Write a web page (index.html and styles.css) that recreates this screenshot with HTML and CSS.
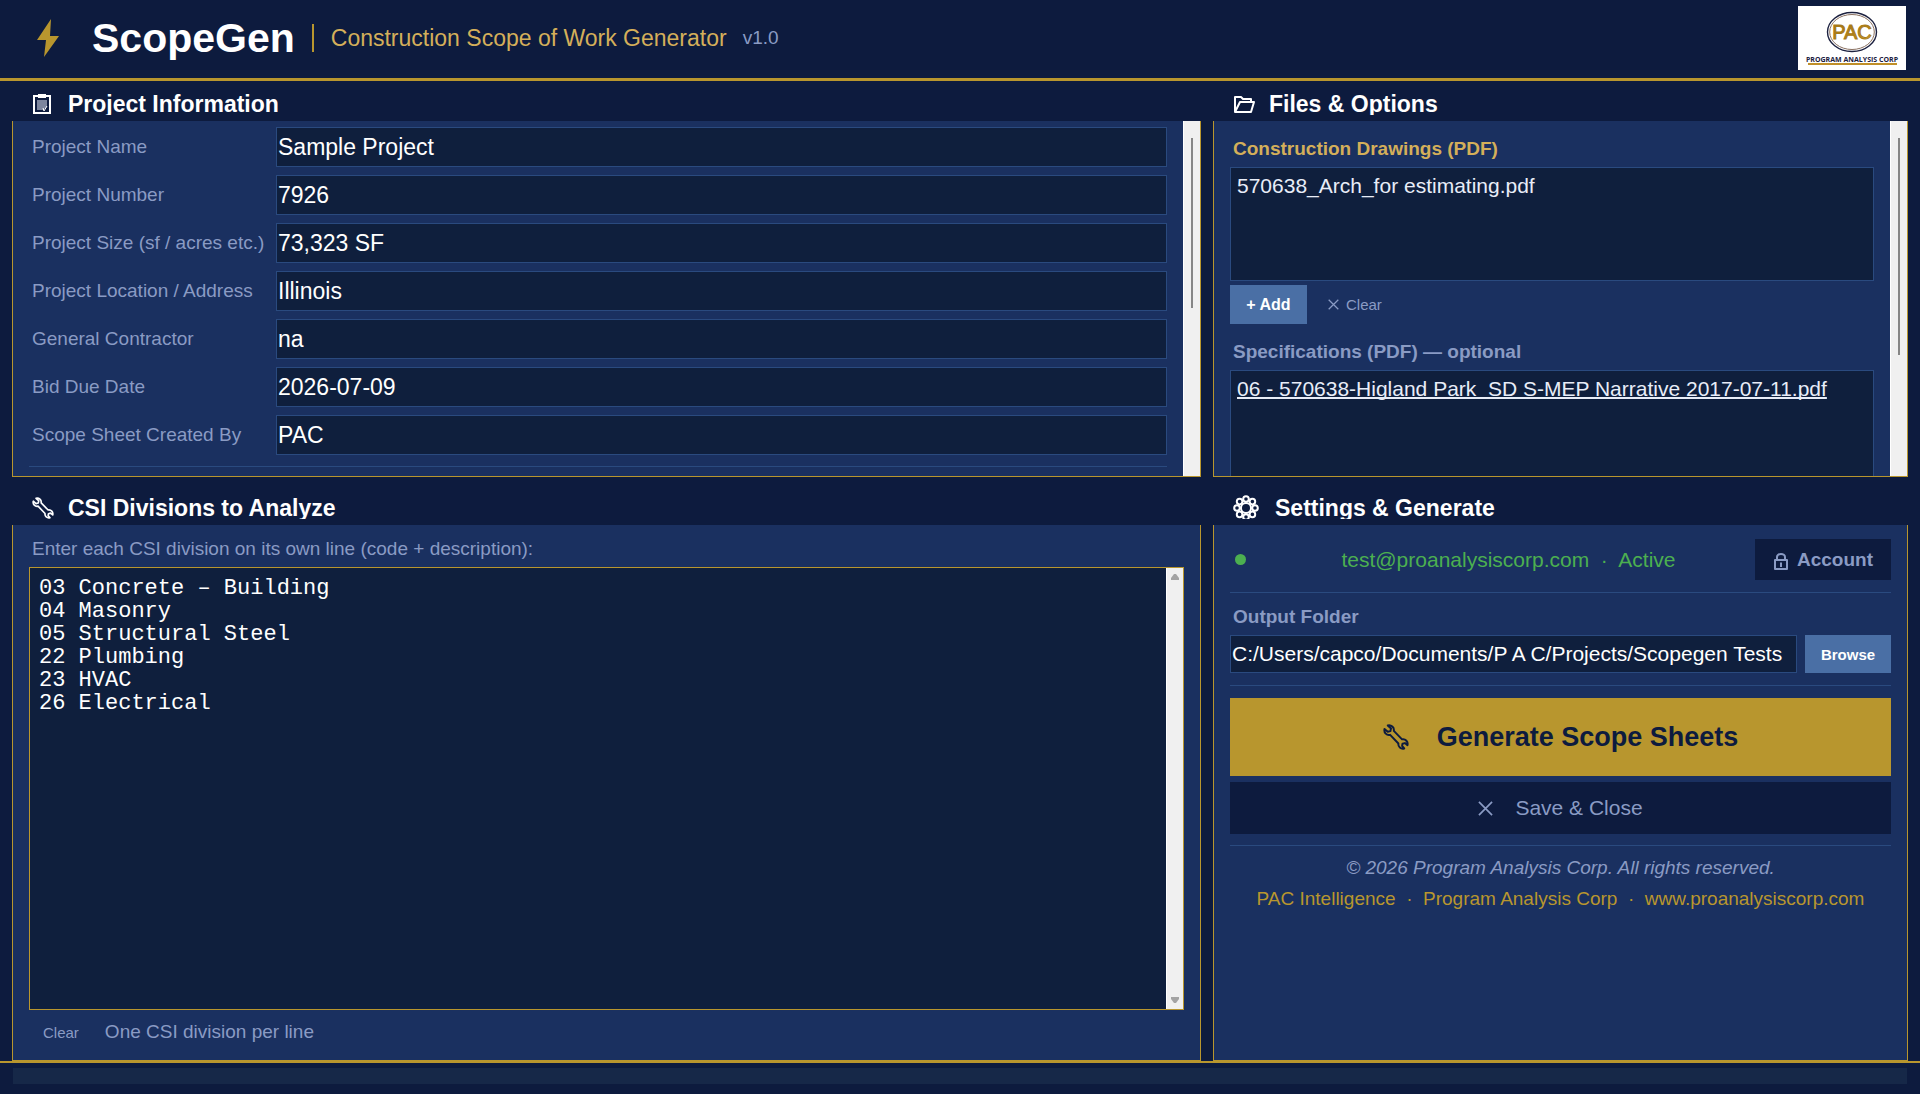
FILE: index.html
```html
<!DOCTYPE html>
<html lang="en">
<head>
    <meta charset="UTF-8">
    <title>ScopeGen - Construction Scope of Work Generator</title>
    <meta name="viewport" content="width=device-width, initial-scale=1">
    <link rel="stylesheet" href="styles.css">
</head>
<body>
    <!-- shared icons -->
    <svg class="icon-defs" aria-hidden="true">
        <symbol id="wrench" viewBox="0 0 24 24">
            <path d="M4.4 1.4 L7.4 4.2 L6.8 6.6 L4.4 7.2 L1.4 4.6 C0.6 8 3.4 10.8 6.6 10 L14.2 18 C13.8 21 16.4 23.4 19.6 22.6 L17.6 20.2 L18 18.2 L20.2 17.6 L22.6 19.6 C23.4 16.4 20.8 13.6 17.6 14.2 L10 6.4 C10.6 3.2 7.6 0.6 4.4 1.4 Z" fill="none" stroke="currentColor" stroke-width="1.8" stroke-linejoin="round"/>
        </symbol>
        <symbol id="cross" viewBox="0 0 16 16">
            <path d="M1 1 L15 15 M15 1 L1 15" fill="none" stroke="currentColor" stroke-width="1.8"/>
        </symbol>
    </svg>

    <header class="app-header">
        <svg class="bolt" viewBox="0 0 22 38"><path d="M14 0 L0 21 H9 L7 38 L22 17 H13 Z" fill="#b8962e"/></svg>
        <h1 class="app-name">ScopeGen</h1>
        <span class="header-divider"></span>
        <span class="app-subtitle">Construction Scope of Work Generator</span>
        <span class="app-version">v1.0</span>
        <svg class="logo" viewBox="0 0 108 64" role="img" aria-label="Program Analysis Corp">
            <defs>
                <linearGradient id="gold" x1="0" y1="0" x2="1" y2="1">
                    <stop offset="0" stop-color="#9a6a14"/>
                    <stop offset="0.6" stop-color="#b98a1c"/>
                    <stop offset="1" stop-color="#d9b040"/>
                </linearGradient>
            </defs>
            <rect width="108" height="64" fill="#fff"/>
            <ellipse cx="54" cy="26" rx="24.5" ry="19.5" fill="none" stroke="#1c2140" stroke-width="1.4"/>
            <ellipse cx="54" cy="26" rx="22.3" ry="17.5" fill="none" stroke="#8a7060" stroke-width="1"/>
            <text class="logo-mark" x="54" y="33" text-anchor="middle">PAC</text>
            <text class="logo-name" x="54" y="56" text-anchor="middle">PROGRAM ANALYSIS CORP</text>
            <rect x="10" y="57" width="89" height="2" fill="#c08f28"/>
        </svg>
    </header>

    <main class="panels">
        <section class="panel">
            <h2 class="panel-title">
                <svg class="title-icon clipboard" viewBox="0 0 18 20"><rect x="1" y="2" width="16" height="17" fill="#0d1b3e" stroke="#fff" stroke-width="2"/><rect x="5" y="0" width="8" height="4" fill="#fff"/><path d="M4 6 H14 V13 L10 16 H4 Z" fill="#7d869e"/><path d="M10 14 L11 17 L14 12" fill="none" stroke="#fff" stroke-width="1"/></svg>
                Project Information
            </h2>
            <div class="panel-body scroll-area">
                <form class="project-form">
                    <label for="projName">Project Name</label>
                    <input type="text" id="projName" value="Sample Project">
                    <label for="projNumber">Project Number</label>
                    <input type="text" id="projNumber" value="7926">
                    <label for="projSize">Project Size (sf / acres etc.)</label>
                    <input type="text" id="projSize" value="73,323 SF">
                    <label for="projLocation">Project Location / Address</label>
                    <input type="text" id="projLocation" value="Illinois">
                    <label for="contractor">General Contractor</label>
                    <input type="text" id="contractor" value="na">
                    <label for="bidDate">Bid Due Date</label>
                    <input type="text" id="bidDate" value="2026-07-09">
                    <label for="createdBy">Scope Sheet Created By</label>
                    <input type="text" id="createdBy" value="PAC">
                    <hr class="form-divider">
                </form>
                <div class="scrollbar"><span class="thumb thumb-short"></span></div>
            </div>
        </section>

        <section class="panel">
            <h2 class="panel-title">
                <svg class="title-icon folder" viewBox="0 0 22 20"><path d="M2 18 V3 H8 L10 5 H18 V8 M2 18 L7 8 H21 L18 18 Z" fill="none" stroke="#fff" stroke-width="2" stroke-linejoin="round"/></svg>
                Files &amp; Options
            </h2>
            <div class="panel-body scroll-area">
                <div class="files">
                    <h3 class="field-title gold">Construction Drawings (PDF)</h3>
                    <ul class="file-list">
                        <li>570638_Arch_for estimating.pdf</li>
                    </ul>
                    <div class="file-actions">
                        <button type="button" class="btn-blue btn-add">+ Add</button>
                        <button type="button" class="btn-text"><svg class="cross-small"><use href="#cross"/></svg>Clear</button>
                    </div>
                    <h3 class="field-title">Specifications (PDF) — optional</h3>
                    <ul class="file-list">
                        <li class="active">06 - 570638-Higland Park&nbsp; SD S-MEP Narrative 2017-07-11.pdf</li>
                    </ul>
                </div>
                <div class="scrollbar"><span class="thumb thumb-long"></span></div>
            </div>
        </section>

        <section class="panel">
            <h2 class="panel-title">
                <svg class="title-icon wrench"><use href="#wrench"/></svg>
                CSI Divisions to Analyze
            </h2>
            <div class="panel-body csi">
                <label for="divisions">Enter each CSI division on its own line (code + description):</label>
                <div class="editor">
                    <textarea id="divisions" spellcheck="false">03 Concrete – Building
04 Masonry
05 Structural Steel
22 Plumbing
23 HVAC
26 Electrical</textarea>
                    <div class="scrollbar arrows">
                        <svg viewBox="0 0 8 6"><path d="M3 0 H5 L8 4 V6 H0 V4 Z" fill="#a3a3a3"/></svg>
                        <svg viewBox="0 0 8 6"><path d="M0 0 H8 V2 L5 6 H3 L0 2 Z" fill="#a3a3a3"/></svg>
                    </div>
                </div>
                <div class="csi-footer">
                    <button type="button" class="btn-text">Clear</button>
                    <span>One CSI division per line</span>
                </div>
            </div>
        </section>

        <section class="panel">
            <h2 class="panel-title">
                <svg class="title-icon gear" viewBox="0 0 26 26">
                    <g fill="none" stroke="#fff" stroke-width="2">
                        <circle cx="13" cy="13" r="5"/>
                        <circle cx="13" cy="4" r="2.8"/><circle cx="19.4" cy="6.6" r="2.8"/>
                        <circle cx="22" cy="13" r="2.8"/><circle cx="19.4" cy="19.4" r="2.8"/>
                        <circle cx="13" cy="22" r="2.8"/><circle cx="6.6" cy="19.4" r="2.8"/>
                        <circle cx="4" cy="13" r="2.8"/><circle cx="6.6" cy="6.6" r="2.8"/>
                    </g>
                </svg>
                Settings &amp; Generate
            </h2>
            <div class="panel-body settings">
                <div class="account-row">
                    <span class="status-dot"></span>
                    <span class="account-status">test@proanalysiscorp.com&nbsp; ·&nbsp; Active</span>
                    <button type="button" class="btn-dark btn-account">
                        <svg class="lock" viewBox="0 0 16 18"><path d="M4 7 V4 A4 3 0 0 1 12 4 V7 M2 7 H14 V16 H2 Z M8 10 V14 M7 10.5 H9" fill="none" stroke="currentColor" stroke-width="2" stroke-linejoin="round"/></svg>
                        Account
                    </button>
                </div>
                <hr>
                <label class="field-title" for="outputFolder">Output Folder</label>
                <div class="folder-row">
                    <input type="text" id="outputFolder" value="C:/Users/capco/Documents/P A C/Projects/Scopegen Tests">
                    <button type="button" class="btn-blue btn-browse">Browse</button>
                </div>
                <hr>
                <button type="button" class="btn-generate"><svg class="generate-icon"><use href="#wrench"/></svg>Generate Scope Sheets</button>
                <button type="button" class="btn-dark btn-save"><svg class="cross-big"><use href="#cross"/></svg>Save &amp; Close</button>
                <hr>
                <p class="copyright">© 2026 Program Analysis Corp. All rights reserved.</p>
                <p class="company">PAC Intelligence&nbsp; ·&nbsp; Program Analysis Corp&nbsp; ·&nbsp; <a href="#">www.proanalysiscorp.com</a></p>
            </div>
        </section>
    </main>

    <footer class="status-bar">
        <div class="progress"></div>
    </footer>
</body>
</html>
```
FILE: styles.css
```css
* {
    box-sizing: border-box;
}
body {
    margin: 0;
    height: 100vh;
    display: flex;
    flex-direction: column;
    background: #0d1b3e;
    color: #fff;
    font-family: "Liberation Sans", Arial, sans-serif;
    font-size: 19px;
    overflow: hidden;
}
h1, h2, h3, p, ul {
    margin: 0;
    padding: 0;
}
button, input, textarea {
    font-family: inherit;
    margin: 0;
    border: none;
    border-radius: 0;
    outline: none;
}
button {
    cursor: pointer;
    display: flex;
    align-items: center;
    justify-content: center;
}
hr {
    width: 100%;
    margin: 0;
    border: none;
    border-top: 1px solid #2a4a7f;
}
.icon-defs {
    display: none;
}

/* header */
.app-header {
    display: flex;
    align-items: center;
    height: 81px;
    flex: none;
    padding: 0 14px 2px 37px;
    border-bottom: 3px solid #b8962e;
}
.bolt {
    width: 22px;
    height: 38px;
    margin-right: 33px;
}
.app-name {
    font-size: 41px;
    line-height: 48px;
}
.header-divider {
    width: 2px;
    height: 28px;
    margin: 0 17px;
    background: #b8962e;
}
.app-subtitle {
    color: #d4af5a;
    font-size: 23px;
}
.app-version {
    margin-left: 16px;
    color: #8a9bc4;
}
.logo {
    width: 108px;
    height: 64px;
    margin-left: auto;
}
.logo-mark {
    font-size: 20px;
    fill: url(#gold);
    stroke: #a87a18;
}
.logo-name {
    font-family: "Open Sans", sans-serif;
    font-size: 7px;
    font-weight: bold;
    fill: #1c2140;
}

/* panels */
.panels {
    flex: 1;
    min-height: 0;
    display: grid;
    grid-template-columns: 1189fr 695fr;
    grid-template-rows: minmax(0, 389fr) minmax(0, 569fr);
    gap: 15px 12px;
    padding: 7px 12px 0;
}
.panel {
    display: flex;
    flex-direction: column;
    min-width: 0;
}
.panel-title {
    display: flex;
    align-items: center;
    height: 27px;
    flex: none;
    margin-bottom: 6px;
    padding: 4px 0 0 20px;
    overflow: hidden;
    font-size: 23px;
    line-height: 32px;
}
.title-icon {
    flex: none;
}
.clipboard {
    width: 20px;
    height: 20px;
    margin-right: 16px;
}
.folder {
    width: 22px;
    height: 20px;
    margin-right: 14px;
}
.wrench {
    width: 22px;
    height: 22px;
    margin-right: 14px;
}
.gear {
    width: 26px;
    height: 26px;
    margin-right: 16px;
}
.panel-body {
    flex: 1;
    min-height: 0;
    background: #1a3060;
    border: 1px solid #b8962e;
    border-top: none;
    overflow: hidden;
}
.scroll-area {
    display: flex;
}
.scrollbar {
    width: 17px;
    flex: none;
    background: #f0f0f0;
    border-left: 1px solid #fff;
    display: flex;
    flex-direction: column;
    align-items: center;
}
.thumb {
    width: 2px;
    margin-top: 17px;
    background: #868686;
}
.thumb-short {
    height: 48%;
}
.thumb-long {
    height: 61%;
}
.arrows {
    justify-content: space-between;
    padding: 6px 0;
}
.arrows svg {
    width: 8px;
    height: 6px;
}

/* project information */
.project-form {
    flex: 1;
    display: grid;
    grid-template-columns: 239px 1fr;
    grid-auto-rows: 40px;
    gap: 8px;
    align-items: center;
    padding: 6px 16px 0;
}
.project-form label, .csi label {
    padding-left: 3px;
    color: #8a9bc4;
    white-space: nowrap;
}
.project-form input, .folder-row input {
    min-width: 0;
    height: 100%;
    padding: 0 1px;
    background: #0f1f3d;
    border: 1px solid #2a4a7f;
    color: #fff;
    font-size: 23px;
}
.form-divider {
    grid-column: 1 / -1;
    align-self: start;
    margin-top: 3px;
}

/* files */
.files {
    flex: 1;
    min-width: 0;
    padding: 16px 16px 0;
}
.field-title {
    padding-left: 3px;
    color: #8a9bc4;
    font-size: 19px;
    font-weight: bold;
    line-height: 24px;
}
.field-title.gold {
    color: #d4af5a;
}
.file-list {
    height: 114px;
    margin-top: 6px;
    padding: 6px;
    list-style: none;
    background: #0f1f3d;
    border: 1px solid #2a4a7f;
    color: #e8edf8;
    font-size: 21px;
    line-height: 24px;
    white-space: nowrap;
}
.file-list .active {
    text-decoration: underline;
    text-decoration-thickness: 2px;
    text-decoration-skip-ink: none;
}
.file-actions {
    display: flex;
    margin: 4px 0 16px;
}
.btn-blue {
    background: #4a6fa5;
    color: #fff;
    font-size: 16px;
    font-weight: bold;
}
.btn-add {
    width: 77px;
    height: 39px;
}
.btn-text {
    gap: 7px;
    padding: 0 14px;
    background: none;
    color: #8a9bc4;
    font-size: 15px;
}
.file-actions .btn-text {
    margin-left: 7px;
}
.cross-small {
    width: 11px;
    height: 11px;
}

/* divisions */
.csi {
    display: flex;
    flex-direction: column;
    padding: 12px 16px;
}
.csi label {
    line-height: 24px;
}
.editor {
    flex: 1;
    display: flex;
    min-height: 0;
    margin-top: 6px;
    border: 1px solid #b8962e;
}
.editor textarea {
    flex: 1;
    padding: 9px 9px;
    resize: none;
    overflow: hidden;
    background: #0f1f3d;
    color: #fff;
    font-family: "Liberation Mono", "Courier New", monospace;
    font-size: 22px;
    line-height: 23px;
}
.csi-footer {
    display: flex;
    align-items: center;
    gap: 12px;
    margin-top: 8px;
    padding-bottom: 2px;
    color: #8a9bc4;
    line-height: 28px;
}

/* settings */
.settings {
    padding: 14px 16px;
}
.account-row {
    display: flex;
    align-items: center;
    margin-bottom: 12px;
}
.status-dot {
    width: 11px;
    height: 11px;
    margin-left: 5px;
    border-radius: 50%;
    background: #4caf50;
}
.account-status {
    flex: 1;
    padding-left: 16px;
    text-align: center;
    color: #4caf50;
    font-size: 21px;
}
.btn-dark {
    background: #0d1b3e;
    color: #8a9bc4;
}
.btn-account {
    gap: 8px;
    width: 136px;
    height: 41px;
    font-size: 19px;
    font-weight: bold;
}
.lock {
    width: 16px;
    height: 18px;
    margin-top: 5px;
}
.settings .field-title {
    display: block;
    margin-top: 12px;
}
.folder-row {
    display: flex;
    gap: 8px;
    height: 38px;
    margin: 6px 0 12px;
}
.folder-row input {
    flex: 1;
    font-size: 21px;
}
.btn-browse {
    width: 86px;
    font-size: 15px;
}
.btn-generate {
    width: 100%;
    height: 78px;
    margin-top: 12px;
    gap: 28px;
    background: #b8962e;
    color: #0d1b3e;
    font-size: 27px;
    font-weight: bold;
}
.generate-icon {
    width: 26px;
    height: 26px;
}
.btn-save {
    width: 100%;
    height: 52px;
    margin: 6px 0 11px;
    gap: 22px;
    font-size: 21px;
}
.cross-big {
    width: 15px;
    height: 15px;
}
.copyright, .company {
    text-align: center;
    line-height: 24px;
    white-space: nowrap;
}
.copyright {
    margin: 10px 0 7px;
    color: #8a9bc4;
    font-style: italic;
}
.company, .company a {
    color: #b8962e;
    text-decoration: none;
}

/* status bar */
.status-bar {
    flex: none;
    padding: 5px 13px 10px;
    border-top: 2px solid #b8962e;
}
.progress {
    height: 16px;
    background: #162848;
}
```
